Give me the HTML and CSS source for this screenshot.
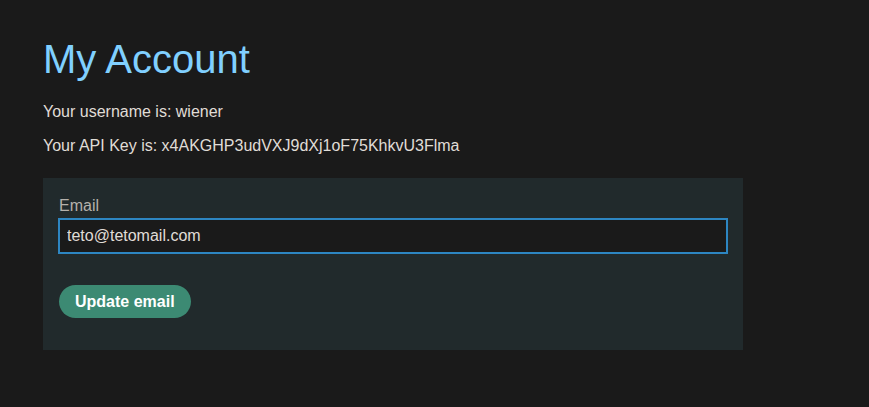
FILE: index.html
```html
<!DOCTYPE html>
<html lang="en">
<head>
  <meta charset="UTF-8">
  <title>My Account</title>
  <link rel="stylesheet" href="styles.css">
</head>
<body>
  <div class="container">
    <h1>My Account</h1>
    <p>Your username is: wiener</p>
    <p>Your API Key is: x4AKGHP3udVXJ9dXj1oF75KhkvU3Flma</p>

    <form class="email-form" onsubmit="return false">
      <label for="email">Email</label>
      <input type="email" id="email" name="email" value="teto@tetomail.com">
      <button type="submit">Update email</button>
    </form>
  </div>
</body>
</html>
```

FILE: styles.css
```css
body {
  font-family: "Liberation Sans", Arial, sans-serif;
  background: #1a1a1a;
  color: #e0ddd7;
  margin: 0;
}
.container {
  padding: 37px 43px;
}
h1 {
  font-size: 40px;
  font-weight: normal;
  color: #80d0ff;
  margin: 0 0 21px;
}
p {
  font-size: 16px;
  line-height: 18px;
  margin: 0 0 15px;
}
p + p {
  margin-top: 16px;
}
.email-form {
  width: 700px;
  box-sizing: border-box;
  background: #212a2c;
  margin-top: 23px;
  padding: 19px 15px 32px;
}
label {
  display: block;
  font-size: 16px;
  color: #b5b1ab;
  margin-left: 1px;
  line-height: 18px;
}
input {
  display: block;
  width: 100%;
  box-sizing: border-box;
  height: 36px;
  margin: 3px 0 31px;
  padding: 0 7px;
  font-family: inherit;
  font-size: 16px;
  color: #e0ddd7;
  background: #1a1a1a;
  border: 2px solid #2d86c2;
  outline: none;
}
button {
  margin-left: 1px;
  height: 33px;
  padding: 0 16px;
  background: #3c8a73;
  border: none;
  border-radius: 17px;
  color: #fff;
  font-family: inherit;
  font-size: 16px;
  font-weight: bold;
  cursor: pointer;
}
```
